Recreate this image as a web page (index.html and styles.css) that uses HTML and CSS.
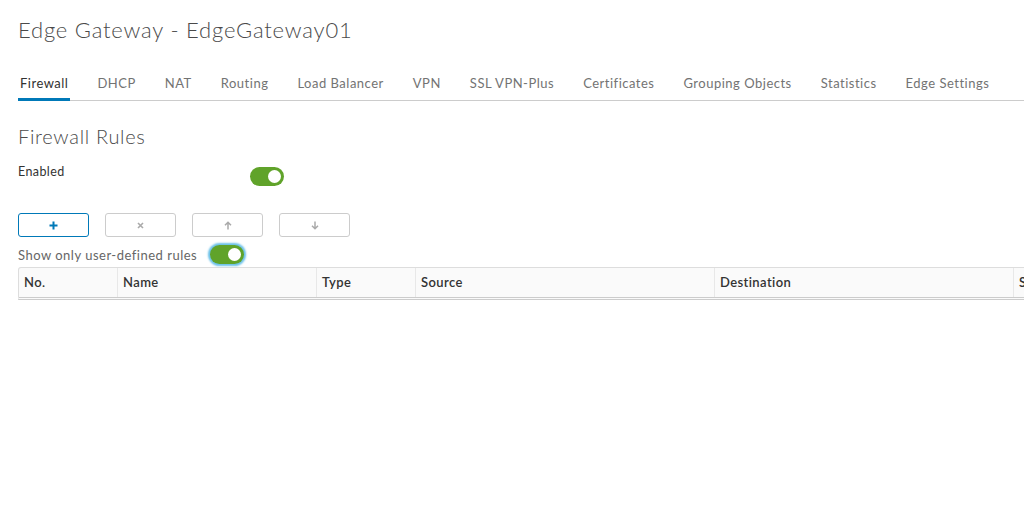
FILE: index.html
```html
<!DOCTYPE html>
<html lang="en">
<head>
	<meta charset="UTF-8">
	<title>Edge Gateway - EdgeGateway01</title>
	<link rel="stylesheet" href="styles.css">
</head>
<body>
	<div class="page">
		<h1 class="title">Edge Gateway - EdgeGateway01</h1>
		<ul class="tabs">
			<li class="tab active">Firewall</li>
			<li class="tab">DHCP</li>
			<li class="tab">NAT</li>
			<li class="tab">Routing</li>
			<li class="tab">Load Balancer</li>
			<li class="tab">VPN</li>
			<li class="tab">SSL VPN-Plus</li>
			<li class="tab">Certificates</li>
			<li class="tab">Grouping Objects</li>
			<li class="tab">Statistics</li>
			<li class="tab">Edge Settings</li>
		</ul>

		<h2 class="section">Firewall Rules</h2>
		<div class="enabled-row">
			<span class="label">Enabled</span>
			<span class="toggle"><span class="knob"></span></span>
		</div>

		<div class="actions">
			<button class="btn primary">
				<svg width="9" height="9" viewBox="0 0 9 9"><path d="M4.5 0.5v8M0.5 4.5h8" stroke="#0079b8" stroke-width="2"/></svg>
			</button>
			<button class="btn">
				<svg width="7" height="7" viewBox="0 0 7 7"><path d="M1 1l5 5M6 1l-5 5" stroke="#aaa" stroke-width="1.6"/></svg>
			</button>
			<button class="btn">
				<svg width="8" height="9" viewBox="0 0 8 9"><path d="M4 8.5V1.5M1 4.3L4 1.3L7 4.3" stroke="#aaa" stroke-width="1.5" fill="none"/></svg>
			</button>
			<button class="btn">
				<svg width="8" height="9" viewBox="0 0 8 9"><path d="M4 0.5V7.5M1 4.7L4 7.7L7 4.7" stroke="#aaa" stroke-width="1.5" fill="none"/></svg>
			</button>
		</div>

		<div class="filter-row">
			<span class="label-light">Show only user-defined rules</span>
			<span class="toggle focus"><span class="knob"></span></span>
		</div>

		<div class="grid">
			<div class="cell c-no">No.</div>
			<div class="cell c-name">Name</div>
			<div class="cell c-type">Type</div>
			<div class="cell c-src">Source</div>
			<div class="cell c-dst">Destination</div>
			<div class="cell c-svc">Service</div>
		</div>
	</div>
</body>
</html>
```

FILE: styles.css
```css
*{
	margin: 0;
	padding: 0;
	box-sizing: border-box;
}
body{
	background: #fff;
	font-family: Lato, "Open Sans", sans-serif;
	color: #565656;
	overflow: hidden;
	width: 1024px;
	height: 515px;
}
.page{
	padding: 0 0 0 18px;
	width: 1200px;
}
.title{
	font-size: 22px;
	font-weight: 300;
	color: #4a4a4a;
	line-height: 28px;
	padding-top: 16px;
	letter-spacing: 0.8px;
}
.tabs{
	list-style: none;
	display: flex;
	margin-top: 28px;
	border-bottom: 1px solid #ccc;
	width: 1100px;
	height: 29px;
}
.tab{
	flex-shrink: 0;
	white-space: nowrap;
	font-size: 13px;
	color: #737373;
	padding: 0 2px;
	margin-right: 25px;
	line-height: 22px;
	letter-spacing: 0.5px;
}
.tab.active{
	color: #313131;
	border-bottom: 3px solid #0079b8;
	height: 29px;
}
.section{
	font-size: 20px;
	font-weight: 300;
	color: #4a4a4a;
	margin-top: 22px;
	line-height: 26px;
	letter-spacing: 0.7px;
}
.enabled-row{
	display: flex;
	align-items: center;
	margin-top: 15px;
	height: 20px;
}
.label{
	font-size: 12.5px;
	color: #333;
	width: 232px;
	margin-top: -6px;
	letter-spacing: 0.4px;
}
.toggle{
	display: inline-block;
	width: 34px;
	height: 19px;
	border-radius: 10px;
	background: #60a32a;
	position: relative;
	margin-top: 4px;
}
.knob{
	position: absolute;
	top: 3px;
	right: 3px;
	width: 13px;
	height: 13px;
	border-radius: 50%;
	background: #fff;
}
.toggle.focus{
	box-shadow: 0 0 2px 2px #6bc1e8;
	margin-top: 0;
}
.actions{
	display: flex;
	gap: 16px;
	margin-top: 29px;
}
.btn{
	width: 71px;
	height: 24px;
	border: 1px solid #ccc;
	border-radius: 3px;
	background: #fff;
	display: flex;
	align-items: center;
	justify-content: center;
}
.btn.primary{
	border-color: #0079b8;
}
.filter-row{
	display: flex;
	align-items: center;
	margin-top: 8px;
	gap: 13px;
	height: 19px;
}
.label-light{
	font-size: 13px;
	color: #666;
	letter-spacing: 0.5px;
}
.grid{
	display: flex;
	margin-top: 3px;
	border: 1px solid #ddd;
	border-bottom: 3px double #ccc;
	border-radius: 3px 3px 0 0;
	background: #fafafa;
	height: 33px;
}
.cell{
	flex-shrink: 0;
	font-size: 13px;
	font-weight: 600;
	color: #333;
	padding: 6px 5px;
	border-right: 1px solid #e8e8e8;
	letter-spacing: 0.4px;
}
.c-no{ width: 99px; }
.c-name{ width: 199px; }
.c-type{ width: 99px; }
.c-src{ width: 299px; }
.c-dst{ width: 299px; }
.c-svc{ width: 200px; border-right: 0; }
```
